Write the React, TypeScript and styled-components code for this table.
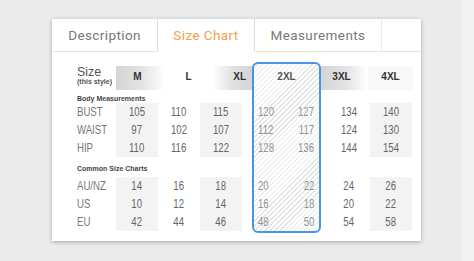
import React, { FC } from 'react';
import styled, { createGlobalStyle, css } from 'styled-components';

const GlobalStyle = createGlobalStyle`
  html, body {
    margin: 0;
    padding: 0;
  }
  body {
    background: linear-gradient(to right, #ebebeb 462px, #f2f2f2 462px);
    font-family: 'Liberation Sans', Arial, sans-serif;
  }
`;

type Tone = 'left' | 'right' | 'flat' | 'none';

interface SizeCol {
  size: string;
  tone: Tone;
  pr: number;
  end?: boolean;
}

const leftSizes: SizeCol[] = [
  { size: 'M', tone: 'left', pr: 6 },
  { size: 'L', tone: 'none', pr: 0 },
  { size: 'XL', tone: 'right', pr: 6, end: true },
];

const rightSizes: SizeCol[] = [
  { size: '3XL', tone: 'left', pr: 6 },
  { size: '4XL', tone: 'flat', pr: 0 },
];

// values per row: M, L, XL, 2XL(a), 2XL(b), 3XL, 4XL
const bodyRows: [string, string[]][] = [
  ['BUST', ['105', '110', '115', '120', '127', '134', '140']],
  ['WAIST', ['97', '102', '107', '112', '117', '124', '130']],
  ['HIP', ['110', '116', '122', '128', '136', '144', '154']],
];

const commonRows: [string, string[]][] = [
  ['AU/NZ', ['14', '16', '18', '20', '22', '24', '26']],
  ['US', ['10', '12', '14', '16', '18', '20', '22']],
  ['EU', ['42', '44', '46', '48', '50', '54', '58']],
];

const Page = styled.div`
  height: 261px;
  box-sizing: border-box;
  padding: 19px 0 0 52px;
`;

const Card = styled.div`
  width: 369px;
  height: 222px;
  background: #fff;
  box-shadow: 0 1px 4px rgba(0, 0, 0, 0.3);
  display: flex;
  flex-direction: column;
`;

const Tabs = styled.div`
  display: flex;
  height: 33px;
`;

const Tab = styled.div<{ $w: number; $active?: boolean }>`
  width: ${(p) => p.$w}px;
  box-sizing: border-box;
  display: flex;
  align-items: center;
  justify-content: center;
  font-family: Roboto, 'Liberation Sans', sans-serif;
  font-size: 13.5px;
  letter-spacing: 0.4px;
  color: #787878;
  border-bottom: 1px solid #e6e6e6;
  ${(p) =>
    p.$active &&
    css`
      color: #f4a04c;
      border-left: 1px solid #dcdcdc;
      border-right: 1px solid #dcdcdc;
      border-bottom-color: transparent;
    `}
`;

const TabFill = styled.div`
  flex: 1;
  border-left: 1px solid #ececec;
  border-bottom: 1px solid #e6e6e6;
`;

const Chart = styled.div`
  display: flex;
  align-items: flex-start;
  margin: 10px 0 0 20px;
`;

const Block = styled.div<{ $w: number }>`
  width: ${(p) => p.$w}px;
  padding-top: 4px;
  display: flex;
  flex-direction: column;
`;

const HeadRow = styled.div<{ $cols: string }>`
  display: grid;
  grid-template-columns: ${(p) => p.$cols};
  height: 24px;
`;

const toneBg: Record<Tone, string> = {
  left: 'linear-gradient(to right, #d4d4d4 0%, #e4e4e4 55%, #ffffff 100%)',
  right: 'linear-gradient(to right, #ffffff 0%, #e2e2e2 50%, #d4d4d4 100%)',
  flat: '#f8f8f8',
  none: 'transparent',
};

const HeadCell = styled.div<{ $tone: Tone; $pr: number; $end?: boolean }>`
  display: flex;
  align-items: center;
  justify-content: ${(p) => (p.$end ? 'flex-end' : 'center')};
  padding: 0 ${(p) => p.$pr}px 3px 0;
  background: ${(p) => toneBg[p.$tone]};
  font-size: 10px;
  font-weight: bold;
  color: #333;
`;

const SizeLabel = styled.div`
  padding-left: 5px;
  color: #555;
  display: flex;
  flex-direction: column;
`;

const SizeWord = styled.span`
  font-size: 12.5px;
  line-height: 12px;
`;

const SizeNote = styled.span`
  font-size: 7px;
  line-height: 8px;
  font-weight: bold;
`;

const Section = styled.div<{ $h: number; $pb?: number }>`
  height: ${(p) => p.$h}px;
  box-sizing: border-box;
  padding: 0 0 ${(p) => p.$pb || 0}px 5px;
  display: flex;
  align-items: flex-end;
  font-size: 7px;
  line-height: 8px;
  font-weight: bold;
  color: #444;
  white-space: nowrap;
`;

const DataRow = styled.div<{ $cols: string; $ml?: number }>`
  display: grid;
  grid-template-columns: ${(p) => p.$cols};
  height: 18px;
  margin-left: ${(p) => p.$ml || 0}px;
`;

// the chart's figures are set in a condensed face
const Narrow = styled.span<{ $origin?: string }>`
  display: inline-block;
  font-size: 12px;
  transform: scaleX(0.8);
  transform-origin: ${(p) => p.$origin || 'center'};
`;

const RowLabel = styled.div`
  display: flex;
  align-items: center;
  padding-left: 5px;
  color: #777;
`;

const Value = styled.div<{ $shade?: boolean }>`
  display: flex;
  align-items: center;
  justify-content: center;
  color: #666;
  background: ${(p) => (p.$shade ? '#f3f3f3' : 'transparent')};
`;

const Highlight = styled.div`
  width: 69px;
  height: 171px;
  box-sizing: border-box;
  border: 2px solid #4796e6;
  border-radius: 6px;
  background: repeating-linear-gradient(135deg, #ffffff 0 2.5px, #e3e3e3 2.5px 3.5px);
  display: flex;
  flex-direction: column;
`;

const HighlightHead = styled.div`
  height: 26px;
  display: flex;
  align-items: center;
  justify-content: center;
  padding-bottom: 2px;
  box-sizing: border-box;
  font-size: 10px;
  color: #555;
  font-weight: bold;
`;

const Spacer = styled.div<{ $h: number }>`
  height: ${(p) => p.$h}px;
`;

const PairRow = styled.div`
  height: 18px;
  display: flex;
  align-items: center;
  justify-content: space-between;
  padding: 0 5px 0 4px;
  color: #939393;
`;

const LeftGroup: FC<{ rows: [string, string[]][] }> = ({ rows }) => (
  <>
    {rows.map(([label, vals]) => (
      <DataRow key={label} $cols="44px 42px 42px 42px">
        <RowLabel>
          <Narrow $origin="left">{label}</Narrow>
        </RowLabel>
        <Value $shade>
          <Narrow>{vals[0]}</Narrow>
        </Value>
        <Value>
          <Narrow>{vals[1]}</Narrow>
        </Value>
        <Value $shade>
          <Narrow>{vals[2]}</Narrow>
        </Value>
      </DataRow>
    ))}
  </>
);

const MidGroup: FC<{ rows: [string, string[]][] }> = ({ rows }) => (
  <>
    {rows.map(([label, vals]) => (
      <PairRow key={label}>
        <Narrow $origin="left">{vals[3]}</Narrow>
        <Narrow $origin="right">{vals[4]}</Narrow>
      </PairRow>
    ))}
  </>
);

const RightGroup: FC<{ rows: [string, string[]][] }> = ({ rows }) => (
  <>
    {rows.map(([label, vals]) => (
      <DataRow key={label} $cols="42px 42px" $ml={7}>
        <Value>
          <Narrow>{vals[5]}</Narrow>
        </Value>
        <Value $shade>
          <Narrow>{vals[6]}</Narrow>
        </Value>
      </DataRow>
    ))}
  </>
);

const App: FC = () => (
  <>
    <GlobalStyle />
    <Page>
      <Card>
        <Tabs>
          <Tab $w={105}>Description</Tab>
          <Tab $w={98} $active>
            Size Chart
          </Tab>
          <Tab $w={126}>Measurements</Tab>
          <TabFill />
        </Tabs>
        <Chart>
          <Block $w={180}>
            <HeadRow $cols="44px 49px 47px 40px">
              <SizeLabel>
                <SizeWord>Size</SizeWord>
                <SizeNote>(this style)</SizeNote>
              </SizeLabel>
              {leftSizes.map((s) => (
                <HeadCell key={s.size} $tone={s.tone} $pr={s.pr} $end={s.end}>
                  {s.size}
                </HeadCell>
              ))}
            </HeadRow>
            <Section $h={13}>Body Measurements</Section>
            <LeftGroup rows={bodyRows} />
            <Section $h={20} $pb={4}>
              Common Size Charts
            </Section>
            <LeftGroup rows={commonRows} />
          </Block>
          <Highlight>
            <HighlightHead>2XL</HighlightHead>
            <Spacer $h={13} />
            <MidGroup rows={bodyRows} />
            <Spacer $h={20} />
            <MidGroup rows={commonRows} />
          </Highlight>
          <Block $w={92}>
            <HeadRow $cols="47px 45px">
              {rightSizes.map((s) => (
                <HeadCell key={s.size} $tone={s.tone} $pr={s.pr} $end={s.end}>
                  {s.size}
                </HeadCell>
              ))}
            </HeadRow>
            <Spacer $h={13} />
            <RightGroup rows={bodyRows} />
            <Spacer $h={20} />
            <RightGroup rows={commonRows} />
          </Block>
        </Chart>
      </Card>
    </Page>
  </>
);

export default App;
